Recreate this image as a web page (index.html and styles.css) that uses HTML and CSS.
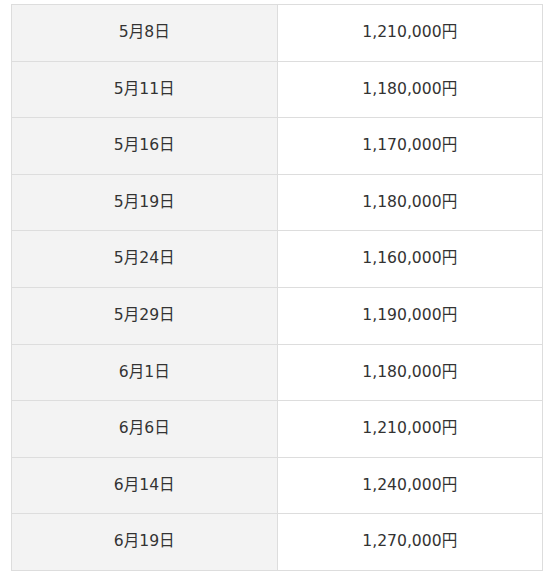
FILE: index.html
```html
<!DOCTYPE html>
<html lang="ja">
<head>
<meta charset="utf-8">
<link rel="stylesheet" href="styles.css">
</head>
<body>
<table class="price-table">
  <tbody>
    <tr><th>5月8日</th><td>1,210,000円</td></tr>
    <tr><th>5月11日</th><td>1,180,000円</td></tr>
    <tr><th>5月16日</th><td>1,170,000円</td></tr>
    <tr><th>5月19日</th><td>1,180,000円</td></tr>
    <tr><th>5月24日</th><td>1,160,000円</td></tr>
    <tr><th>5月29日</th><td>1,190,000円</td></tr>
    <tr><th>6月1日</th><td>1,180,000円</td></tr>
    <tr><th>6月6日</th><td>1,210,000円</td></tr>
    <tr><th>6月14日</th><td>1,240,000円</td></tr>
    <tr><th>6月19日</th><td>1,270,000円</td></tr>
  </tbody>
</table>
</body>
</html>
```
FILE: styles.css
```css
html, body {
  margin: 0;
  padding: 0;
  background: #ffffff;
}
body {
  padding: 4px 11px 0 11px;
  font-family: "DejaVu Sans", "Noto Sans CJK JP", sans-serif;
  color: #333333;
}
.price-table {
  width: 532px;
  border-collapse: collapse;
  table-layout: fixed;
}
.price-table th,
.price-table td {
  border: 1px solid #dddddd;
  height: 56.6px;
  padding: 0;
  text-align: center;
  vertical-align: middle;
  font-size: 15.6px;
  font-weight: normal;
  line-height: 1.5;
  box-sizing: border-box;
}
.price-table th {
  width: 50%;
  background: #f3f3f3;
}
.price-table td {
  background: #ffffff;
}
```
